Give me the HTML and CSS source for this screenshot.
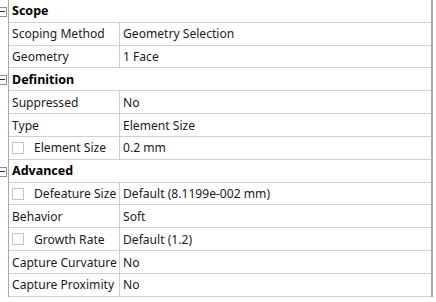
FILE: index.html
```html
<!DOCTYPE html>
<html lang="en">
<head>
    <meta charset="UTF-8">
    <title>Details</title>
    <link rel="stylesheet" href="styles.css">
</head>
<body>
    <div class="details">
        <div class="group">
            <span class="toggle"></span>
            <span class="group-title">Scope</span>
        </div>
        <div class="prop">
            <div class="name">Scoping Method</div>
            <div class="value">Geometry Selection</div>
        </div>
        <div class="prop">
            <div class="name">Geometry</div>
            <div class="value">1 Face</div>
        </div>

        <div class="group">
            <span class="toggle"></span>
            <span class="group-title">Definition</span>
        </div>
        <div class="prop">
            <div class="name">Suppressed</div>
            <div class="value">No</div>
        </div>
        <div class="prop">
            <div class="name">Type</div>
            <div class="value">Element Size</div>
        </div>
        <div class="prop">
            <div class="name"><span class="check"></span>Element Size</div>
            <div class="value">0.2 mm</div>
        </div>

        <div class="group">
            <span class="toggle"></span>
            <span class="group-title">Advanced</span>
        </div>
        <div class="prop">
            <div class="name"><span class="check"></span>Defeature Size</div>
            <div class="value">Default (8.1199e-002 mm)</div>
        </div>
        <div class="prop">
            <div class="name">Behavior</div>
            <div class="value">Soft</div>
        </div>
        <div class="prop">
            <div class="name"><span class="check"></span>Growth Rate</div>
            <div class="value">Default (1.2)</div>
        </div>
        <div class="prop">
            <div class="name">Capture Curvature</div>
            <div class="value">No</div>
        </div>
        <div class="prop">
            <div class="name">Capture Proximity</div>
            <div class="value">No</div>
        </div>
    </div>
</body>
</html>
```

FILE: styles.css
```css
:root {
    --line-color: #cfcfcf;
    --edge-color: #a8a8a8;
    --text-color: #1a1a1a;
}
body {
    margin: 0;
    background: #ffffff;
    font-family: 'Noto Sans', 'Open Sans', sans-serif;
    font-size: 12.1px;
    color: var(--text-color);
}
.details {
    margin: -1px 0 0 8px;
    width: 422px;
    border-left: 1px solid var(--edge-color);
    border-right: 2px solid var(--edge-color);
    border-top: 1px solid var(--line-color);
}
.group,
.prop {
    height: 21.83px;
    border-bottom: 1px solid var(--line-color);
    box-sizing: content-box;
}
.group {
    position: relative;
    display: flex;
    align-items: center;
    padding-left: 3px;
}
.group-title {
    font-weight: bold;
    font-size: 12.5px;
    color: #000000;
}
.toggle {
    position: absolute;
    left: -12px;
    top: 7px;
    width: 8px;
    height: 8px;
    border: 1px solid #909090;
    background: #ffffff;
}
.toggle::after {
    content: "";
    position: absolute;
    left: 2px;
    top: 3px;
    width: 5px;
    height: 1px;
    background: #303030;
}
.prop {
    display: grid;
    grid-template-columns: 111px 1fr;
}
.name,
.value {
    display: flex;
    align-items: center;
    padding-left: 3px;
    white-space: nowrap;
}
.name {
    border-right: 1px solid var(--line-color);
}
.check {
    width: 12px;
    height: 12px;
    border: 1px solid #c4c4c4;
    background: #ffffff;
    margin-right: 10px;
    box-sizing: border-box;
}
```
